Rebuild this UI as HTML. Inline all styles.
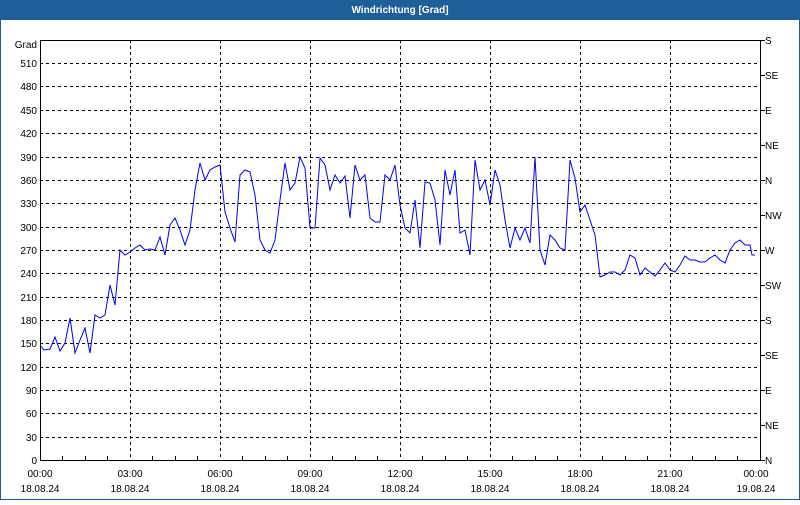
<!DOCTYPE html>
<html><head><meta charset="utf-8"><style>
body{margin:0;width:800px;height:500px;overflow:hidden;background:#fff;font-family:"Liberation Sans","DejaVu Sans",sans-serif}
</style></head><body>
<svg width="800" height="500" xmlns="http://www.w3.org/2000/svg" font-family="Liberation Sans, sans-serif" font-size="10">
<rect x="0" y="0" width="800" height="500" fill="#fff"/>
<rect x="0" y="0" width="800" height="20" fill="#1f5f99"/>
<rect x="0.5" y="19.5" width="799" height="480" fill="none" stroke="#1f5f99"/>
<text x="400" y="13" text-anchor="middle" fill="#fff" font-weight="bold" font-size="10">Windrichtung [Grad]</text>
<g stroke="#000" stroke-dasharray="3,3" stroke-width="1">
<path d="M40 63.5H761M40 86.5H761M40 110.5H761M40 133.5H761M40 157.5H761M40 180.5H761M40 203.5H761M40 227.5H761M40 250.5H761M40 273.5H761M40 297.5H761M40 320.5H761M40 343.5H761M40 367.5H761M40 390.5H761M40 413.5H761M40 437.5H761"/>
<path d="M130.5 40V460M220.5 40V460M310.5 40V460M400.5 40V460M490.5 40V460M580.5 40V460M670.5 40V460"/>
</g>
<rect x="40.5" y="40.5" width="720" height="420" fill="none" stroke="#000"/>
<g stroke="#000">
<path d="M761 40.5h4M761 75.5h4M761 110.5h4M761 145.5h4M761 180.5h4M761 215.5h4M761 250.5h4M761 285.5h4M761 320.5h4M761 355.5h4M761 390.5h4M761 425.5h4M761 460.5h4"/>
<path d="M62.5 460v-4M85.5 460v-4M107.5 460v-4M152.5 460v-4M175.5 460v-4M197.5 460v-4M242.5 460v-4M265.5 460v-4M287.5 460v-4M332.5 460v-4M355.5 460v-4M377.5 460v-4M422.5 460v-4M445.5 460v-4M467.5 460v-4M512.5 460v-4M535.5 460v-4M557.5 460v-4M602.5 460v-4M625.5 460v-4M647.5 460v-4M692.5 460v-4M715.5 460v-4M737.5 460v-4"/>
</g>
<g text-anchor="end" fill="#000">
<text x="37" y="48">Grad</text>
<text x="37" y="67">510</text><text x="37" y="90">480</text><text x="37" y="114">450</text><text x="37" y="137">420</text><text x="37" y="161">390</text><text x="37" y="184">360</text><text x="37" y="207">330</text><text x="37" y="231">300</text><text x="37" y="254">270</text><text x="37" y="277">240</text><text x="37" y="301">210</text><text x="37" y="324">180</text><text x="37" y="347">150</text><text x="37" y="371">120</text><text x="37" y="394">90</text><text x="37" y="417">60</text><text x="37" y="441">30</text><text x="37" y="464">0</text>
</g>
<g fill="#000">
<text x="765" y="44">S</text><text x="765" y="79">SE</text><text x="765" y="114">E</text><text x="765" y="149">NE</text><text x="765" y="184">N</text><text x="765" y="219">NW</text><text x="765" y="254">W</text><text x="765" y="289">SW</text><text x="765" y="324">S</text><text x="765" y="359">SE</text><text x="765" y="394">E</text><text x="765" y="429">NE</text><text x="765" y="464">N</text>
</g>
<g text-anchor="middle" fill="#000">
<text x="40" y="477">00:00</text><text x="40" y="492">18.08.24</text>
<text x="130" y="477">03:00</text><text x="130" y="492">18.08.24</text>
<text x="220" y="477">06:00</text><text x="220" y="492">18.08.24</text>
<text x="310" y="477">09:00</text><text x="310" y="492">18.08.24</text>
<text x="400" y="477">12:00</text><text x="400" y="492">18.08.24</text>
<text x="490" y="477">15:00</text><text x="490" y="492">18.08.24</text>
<text x="580" y="477">18:00</text><text x="580" y="492">18.08.24</text>
<text x="670" y="477">21:00</text><text x="670" y="492">18.08.24</text>
<text x="756" y="477">00:00</text><text x="756" y="492">19.08.24</text>
</g>
<polyline fill="none" stroke="#0000ee" stroke-width="1" points="40,345 44,350 50,349 55,337 60,351 65,343 70,318 75,353 80,340 85,328 90,353 95,315 100,318 105,315 110,285 115,305 120,250 125,255 130,252 135,248 140,245 145,250 150,249 155,250 160,237 165,255 170,225 175,218 180,230 185,245 190,230 195,190 200,163 205,180 210,170 215,167 220,165 225,212 230,228 235,242 240,175 245,170 250,172 255,195 260,240 265,250 270,253 275,240 280,200 285,163 290,190 295,183 300,157 305,168 310,228 315,228 320,158 325,165 330,190 335,175 340,183 345,176 350,218 355,165 360,180 365,175 370,218 375,222 380,222 385,175 390,180 395,165 400,205 405,228 410,233 415,200 420,248 425,182 430,183 435,200 440,245 445,170 450,195 455,170 460,233 465,230 470,255 475,160 480,190 485,180 490,205 495,170 500,185 505,220 510,248 515,228 520,240 525,228 530,243 535,157 540,250 545,265 550,235 555,240 560,248 565,250 570,160 575,178 580,212 585,205 590,220 595,235 600,277 605,275 610,272 615,272 620,275 625,270 630,255 635,258 640,275 645,268 650,272 655,276 660,270 665,263 670,270 675,272 680,265 685,256 690,260 695,260 700,262 705,262 710,258 715,255 720,260 725,263 730,250 735,243 740,240 745,245 750,245 752,255 755,255"/>
</svg>
</body></html>
